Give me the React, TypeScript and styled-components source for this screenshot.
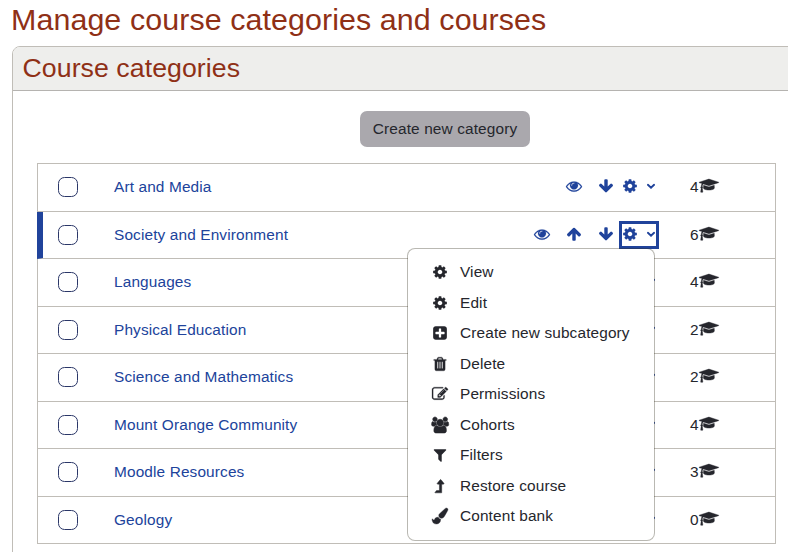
import React from "react";
import styled, { createGlobalStyle } from "styled-components";

const blue = "#20439b";
const dark = "#25262c";
const red = "#8f3016";
const line = "#c0bdb7";

const GlobalStyle = createGlobalStyle`
  * { box-sizing: border-box; }
  html, body { margin: 0; background: #fff; overflow: hidden; }
  body { font-family: "Liberation Sans", Arial, sans-serif; font-size: 15.4px; letter-spacing: 0.13px; color: ${dark}; }
`;

const Page = styled.main`
  width: 788px;
  height: 552px;
  overflow: hidden;
  padding-left: 12px;
`;

const Title = styled.h1`
  margin: 0;
  height: 46px;
  font-size: 30.4px;
  font-weight: 400;
  line-height: 39px;
  letter-spacing: 0.09px;
  white-space: nowrap;
  color: ${red};
  text-indent: -1px;
`;

const Panel = styled.section`
  width: 800px;
  height: 540px;
  border: 1px solid ${line};
  border-radius: 8px;
  overflow: hidden;
`;

const PanelHeading = styled.h2`
  margin: 0;
  height: 44px;
  padding-left: 9.5px;
  border-bottom: 1px solid #b5b3b0;
  background: #eeeeec;
  color: ${red};
  font-size: 26.7px;
  font-weight: 400;
  line-height: 43px;
  letter-spacing: 0.06px;
`;

const Toolbar = styled.div`
  display: flex;
  width: 739px;
  margin-left: 24px;
  padding: 20px 0 16px;
  justify-content: center;
`;

const CreateButton = styled.button`
  width: 170px;
  height: 36px;
  margin-left: 77px;
  margin-right: 0;
  padding: 0 0 1px;
  border: 0;
  border-radius: 7px;
  background: #aaa8ad;
  color: ${dark};
  font: inherit;
  letter-spacing: inherit;
`;

const CategoryList = styled.ul`
  width: 739px;
  margin: 0 0 0 24px;
  padding: 0;
  list-style: none;
  border: 1px solid ${line};
  border-bottom: 0;
`;

const CategoryRow = styled.li<{ $selected?: boolean }>`
  display: grid;
  grid-template-columns: 20px 1fr auto 85px;
  align-items: center;
  height: 48px;
  padding: 0 0 1px 20px;
  border-bottom: 1px solid ${line};
  &:nth-child(even) { height: 47px; padding-bottom: 0; }
  ${(p) =>
    p.$selected &&
    `margin-left: -1px; padding-left: 15px; border-left: 6px solid ${blue};`}
`;

const Checkbox = styled.input`
  appearance: none;
  width: 20px;
  height: 20px;
  margin: 0;
  border: 1px solid #2b3768;
  border-radius: 6.5px;
`;

const CategoryName = styled.a`
  padding-left: 36px;
  padding-bottom: 1px;
  color: ${blue};
`;

const Actions = styled.div`
  display: flex;
  align-items: center;
  margin-right: 31px;
  color: ${blue};
`;

const ActionCell = styled.span`
  display: flex;
  width: 32px;
  padding-bottom: 2px;
  justify-content: center;
`;

const ToggleWrap = styled.div`
  position: relative;
  margin-left: -3px;
`;

const Toggle = styled.div<{ $focused?: boolean }>`
  display: flex;
  align-items: center;
  justify-content: space-between;
  width: 40px;
  height: 28px;
  padding: 0 1px 2px 0;
  border: 3px solid ${(p) => (p.$focused ? blue : "transparent")};
`;

const Count = styled.span`
  display: flex;
  align-items: center;
  padding-bottom: 1px;
  color: ${dark};

  svg { margin-bottom: 1px; }
`;

const Menu = styled.div`
  position: absolute;
  top: 27px;
  right: 4px;
  width: 248px;
  height: 293px;
  padding: 8px 0 0;
  border: 1px solid rgba(50, 46, 30, 0.34);
  border-radius: 8px;
  background: #fff;
  background-clip: padding-box;
  color: ${dark};
  z-index: 1;
`;

const MenuItem = styled.div`
  display: flex;
  align-items: center;
  height: 30.48px;
  padding-left: 20px;
  white-space: nowrap;
`;

const MenuIcon = styled.span`
  display: flex;
  width: 24px;
  margin-right: 8px;
  justify-content: center;
`;

const Glyph = styled.svg`
  display: block;
  flex: none;
  fill: currentColor;
  overflow: visible;
`;

const paths = {
  eye: "M1664 960q-152-236-381-353 61 104 61 225 0 185-131.500 316.500t-316.500 131.500-316.500-131.500-131.500-316.500q0-121 61-225-229 117-381 353 133 205 333.500 326.500t434.500 121.500 434.500-121.500 333.500-326.500zm-720-384q0-20-14-34t-34-14q-125 0-214.500 89.500t-89.500 214.500q0 20 14 34t34 14 34-14 14-34q0-86 61-147t147-61q20 0 34-14t14-34zm848 384q0 34-20 69-140 230-376.500 368.500t-499.500 138.500-499.500-139-376.500-368q-20-35-20-69t20-69q140-229 376.500-368t499.500-139 499.500 139 376.500 368q20 35 20 69z",
  down: "M1675 832q0 53-37 90l-651 652q-39 37-91 37-53 0-90-37l-651-652q-38-36-38-90 0-53 38-91l74-75q39-37 91-37 53 0 90 37l294 294v-704q0-52 38-90t90-38h128q52 0 90 38t38 90v704l294-294q37-37 90-37 52 0 91 37l75 75q37 39 37 91z",
  up: "M1675 971q0 51-37 90l-75 75q-38 38-91 38-54 0-90-38l-294-293v704q0 52-37.500 84.500t-90.500 32.500h-128q-53 0-90.500-32.500t-37.500-84.500v-704l-294 293q-36 38-90 38t-90-38l-75-75q-38-38-38-90 0-53 38-91l651-651q35-37 90-37 54 0 91 37l651 651q37 39 37 91z",
  cog: "M1152 896q0-106-75-181t-181-75-181 75-75 181 75 181 181 75 181-75 75-181zm512-109v222q0 12-8 23t-20 13l-185 28q-19 54-39 91 35 50 107 138 10 12 10 25t-9 23q-27 37-99 108t-94 71q-12 0-26-9l-138-108q-44 23-91 38-16 136-29 186-7 28-36 28h-222q-14 0-24.500-8.500t-11.500-21.500l-28-184q-49-16-90-37l-141 107q-10 9-25 9-14 0-25-11-126-114-165-168-7-10-7-23 0-12 8-23 15-21 51-66.500t54-70.500q-27-50-41-99l-183-27q-13-2-21-12.500t-8-23.500v-222q0-12 8-23t19-13l186-28q14-46 39-92-40-57-107-138-10-12-10-24 0-10 9-23 26-36 98.500-107.500t94.500-71.500q13 0 26 10l138 107q44-23 91-38 16-136 29-186 7-28 36-28h222q14 0 24.500 8.500t11.500 21.500l28 184q49 16 90 37l142-107q9-9 24-9 13 0 25 10 129 119 165 170 7 8 7 22 0 12-8 23-15 21-51 66.500t-54 70.500q26 50 41 98l183 28q13 2 21 12.500t8 23.500z",
  cap: "M1774 836l18 316q4 69-82 128t-235 93.500-323 34.500-323-34.500-235-93.500-82-128l18-316 574 181q22 7 48 7t48-7zm530-324q0 23-22 31l-1120 352q-4 1-10 1t-10-1l-652-206q-43 34-71 111.500t-34 178.500q63 36 63 109 0 69-58 107l58 433q2 14-8 25-9 11-24 11h-192q-15 0-24-11-10-11-8-25l58-433q-58-38-58-107 0-73 65-111 11-207 98-330l-333-104q-22-8-22-31t22-31l1120-352q4-1 10-1t10 1l1120 352q22 8 22 31z",
  plus: "M1408 960v-128q0-26-19-45t-45-19h-320v-320q0-26-19-45t-45-19h-128q-26 0-45 19t-19 45v320h-320q-26 0-45 19t-19 45v128q0 26 19 45t45 19h320v320q0 26 19 45t45 19h128q26 0 45-19t19-45v-320h320q26 0 45-19t19-45zm256-544v960q0 119-84.500 203.500t-203.500 84.500h-960q-119 0-203.500-84.500t-84.500-203.500v-960q0-119 84.500-203.500t203.500-84.500h960q119 0 203.500 84.500t84.500 203.500z",
  trash: "M704 1376v-704q0-14-9-23t-23-9h-64q-14 0-23 9t-9 23v704q0 14 9 23t23 9h64q14 0 23-9t9-23zm256 0v-704q0-14-9-23t-23-9h-64q-14 0-23 9t-9 23v704q0 14 9 23t23 9h64q14 0 23-9t9-23zm256 0v-704q0-14-9-23t-23-9h-64q-14 0-23 9t-9 23v704q0 14 9 23t23 9h64q14 0 23-9t9-23zm-544-992h448l-48-117q-7-9-17-11h-317q-10 2-17 11zm928 32v64q0 14-9 23t-23 9h-96v948q0 83-47 143.500t-113 60.500h-832q-66 0-113-58.500t-47-141.500v-952h-96q-14 0-23-9t-9-23v-64q0-14 9-23t23-9h309l70-167q15-37 54-63t79-26h320q40 0 79 26t54 63l70 167h309q14 0 23 9t9 23z",
  edit: "M888 1184l116-116-152-152-116 116v56h96v96h56zm440-720q-16-16-33 1l-350 350q-17 17-1 33t33-1l350-350q17-17 1-33zm80 594v190q0 119-84.500 203.500t-203.500 84.500h-832q-119 0-203.500-84.500t-84.500-203.500v-832q0-119 84.500-203.500t203.500-84.500h832q63 0 117 25 15 7 18 23 3 17-9 29l-49 49q-14 14-32 8-23-6-45-6h-832q-66 0-113 47t-47 113v832q0 66 47 113t113 47h832q66 0 113-47t47-113v-126q0-13 9-22l64-64q15-15 35-7t20 29zm-96-738l288 288-672 672h-288v-288zm444 132l-92 92-288-288 92-92q28-28 68-28t68 28l152 152q28 28 28 68t-28 68z",
  users: "M657 896q-162 5-265 128h-134q-82 0-138-40.500t-56-118.500q0-353 124-353 6 0 43.500 21t97.500 42.500 119 21.500q67 0 133-23-5 37-5 66 0 139 81 256zm1071 637q0 120-73 189.500t-194 69.500h-874q-121 0-194-69.500t-73-189.500q0-53 3.500-103.500t14-109 26.500-108.500 43-97.500 62-81 85.500-53.500 111.500-20q10 0 43 21.500t73 48 107 48 135 21.500 135-21.500 107-48 73-48 43-21.500q61 0 111.500 20t85.500 53.500 62 81 43 97.500 26.500 108.500 14 109 3.500 103.500zm-1024-1277q0 106-75 181t-181 75-181-75-75-181 75-181 181-75 181 75 75 181zm704 384q0 159-112.500 271.500t-271.500 112.500-271.500-112.500-112.500-271.500 112.500-271.500 271.500-112.500 271.500 112.500 112.500 271.500zm576 225q0 78-56 118.500t-138 40.500h-134q-103-123-265-128 81-117 81-256 0-29-5-66 66 23 133 23 59 0 119-21.500t97.500-42.500 43.500-21q124 0 124 353zm-128-609q0 106-75 181t-181 75-181-75-75-181 75-181 181-75 181 75 75 181z",
  filter: "M1595 295q17 41-14 70l-493 493v742q0 42-39 59-13 5-25 5-27 0-45-19l-256-256q-19-19-19-45v-486l-493-493q-31-29-14-70 17-39 59-39h1280q42 0 59 39z",
  level: "M1337 653q-19 35-57 35h-192v944q0 14-9 23t-23 9h-704q-21 0-29-18-8-20 4-35l160-192q9-11 25-11h320v-720h-192q-38 0-57-35-18-40 10-71l320-384q18-22 49-22t49 22l320 384q27 32 6 71z",
  brush: "M1615 0q70 0 122.500 46.500t52.500 116.500q0 63-45 151-332 629-465 752-97 91-218 91-126 0-216.500-92.500t-90.500-219.500q0-128 92-212l638-579q59-54 130-54zm-909 1034q39 76 106.500 130t150.500 76l1 71q4 213-129.500 347t-348.500 134q-123 0-218-46.500t-152.500-127.500-86.500-183-29-220q7 5 41 30t62 44.500 59 36.500 46 17q41 0 55-37 25-66 57.500-112.500t69.500-76 88-47.500 103-25.500 125-10.500z",
};

type IconName = keyof typeof paths;

const widths: Partial<Record<IconName, number>> = { cap: 2304, users: 2048 };

const weights: Partial<Record<IconName, number>> = {
  eye: 20,
  cap: 45,
  users: 60,
  edit: 30,
  level: 50,
  trash: 30,
  brush: 40,
};

function Icon({ name, size = 16 }: { name: IconName; size?: number }) {
  const w = widths[name] ?? 1792;
  return (
    <Glyph width={(size * w) / 1792} height={size} viewBox={`0 0 ${w} 1792`}>
      <path d={paths[name]} stroke="currentColor" strokeWidth={weights[name] ?? 0} />
    </Glyph>
  );
}

function Chevron() {
  return (
    <Glyph width="8" height="6" viewBox="0 0 8 6">
      <path d="M0.9 1.8 4 4.6 7.1 1.8" fill="none" stroke="currentColor" strokeWidth="1.9" strokeLinecap="round" />
    </Glyph>
  );
}

const menuItems: { icon: IconName; label: string }[] = [
  { icon: "cog", label: "View" },
  { icon: "cog", label: "Edit" },
  { icon: "plus", label: "Create new subcategory" },
  { icon: "trash", label: "Delete" },
  { icon: "edit", label: "Permissions" },
  { icon: "users", label: "Cohorts" },
  { icon: "filter", label: "Filters" },
  { icon: "level", label: "Restore course" },
  { icon: "brush", label: "Content bank" },
];

const categories: { name: string; count: number; actions: IconName[]; open?: boolean }[] = [
  { name: "Art and Media", count: 4, actions: ["eye", "down"] },
  { name: "Society and Environment", count: 6, actions: ["eye", "up", "down"], open: true },
  { name: "Languages", count: 4, actions: ["eye", "up", "down"] },
  { name: "Physical Education", count: 2, actions: ["eye", "up", "down"] },
  { name: "Science and Mathematics", count: 2, actions: ["eye", "up", "down"] },
  { name: "Mount Orange Community", count: 4, actions: ["eye", "up", "down"] },
  { name: "Moodle Resources", count: 3, actions: ["eye", "up", "down"] },
  { name: "Geology", count: 0, actions: ["eye", "up"] },
];

function ActionMenu() {
  return (
    <Menu>
      {menuItems.map((item) => (
        <MenuItem key={item.label}>
          <MenuIcon>
            <Icon name={item.icon} />
          </MenuIcon>
          {item.label}
        </MenuItem>
      ))}
    </Menu>
  );
}

export default function App() {
  return (
    <>
      <GlobalStyle />
      <Page>
        <Title>Manage course categories and courses</Title>
        <Panel>
          <PanelHeading>Course categories</PanelHeading>
          <Toolbar>
            <CreateButton>Create new category</CreateButton>
          </Toolbar>
          <CategoryList>
            {categories.map((c) => (
              <CategoryRow key={c.name} $selected={c.open}>
                <Checkbox type="checkbox" />
                <CategoryName>{c.name}</CategoryName>
                <Actions>
                  {c.actions.map((a) => (
                    <ActionCell key={a}>
                      <Icon name={a} />
                    </ActionCell>
                  ))}
                  <ToggleWrap>
                    <Toggle $focused={c.open}>
                      <Icon name="cog" />
                      <Chevron />
                    </Toggle>
                    {c.open && <ActionMenu />}
                  </ToggleWrap>
                </Actions>
                <Count>
                  {c.count}
                  <Icon name="cap" size={15.4} />
                </Count>
              </CategoryRow>
            ))}
          </CategoryList>
        </Panel>
      </Page>
    </>
  );
}
